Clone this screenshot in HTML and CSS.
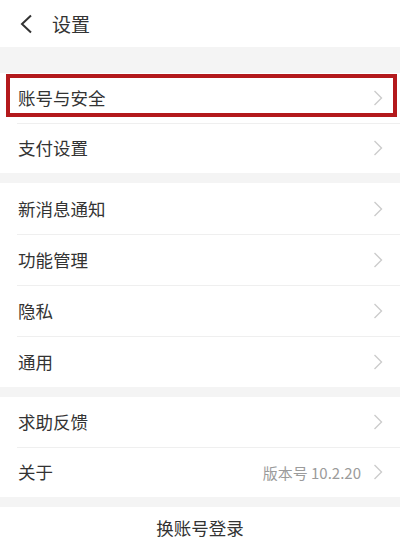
FILE: index.html
```html
<!DOCTYPE html>
<html lang="zh-CN">
<head>
<meta charset="utf-8">
<title>设置</title>
<link rel="stylesheet" href="styles.css">
</head>
<body>
<div class="page">
  <header class="topbar">
    <svg class="back" width="14" height="20" viewBox="0 0 14 20"><path d="M12 1.5 L3 10 L12 18.5" fill="none" stroke="#333" stroke-width="2"/></svg>
    <span class="title">设置</span>
  </header>

  <div class="gap gap-top"></div>
  <section class="group">
    <div class="row highlighted"><span class="label">账号与安全</span><svg class="chev" width="10" height="16" viewBox="0 0 10 16"><path d="M1.5 1 L8.5 8 L1.5 15" fill="none" stroke="#cccccc" stroke-width="1.4"/></svg><span class="mark"></span></div>
    <div class="row"><span class="label">支付设置</span><svg class="chev" width="10" height="16" viewBox="0 0 10 16"><path d="M1.5 1 L8.5 8 L1.5 15" fill="none" stroke="#cccccc" stroke-width="1.4"/></svg></div>
  </section>

  <div class="gap"></div>
  <section class="group group-tall">
    <div class="row"><span class="label">新消息通知</span><svg class="chev" width="10" height="16" viewBox="0 0 10 16"><path d="M1.5 1 L8.5 8 L1.5 15" fill="none" stroke="#cccccc" stroke-width="1.4"/></svg></div>
    <div class="row"><span class="label">功能管理</span><svg class="chev" width="10" height="16" viewBox="0 0 10 16"><path d="M1.5 1 L8.5 8 L1.5 15" fill="none" stroke="#cccccc" stroke-width="1.4"/></svg></div>
    <div class="row"><span class="label">隐私</span><svg class="chev" width="10" height="16" viewBox="0 0 10 16"><path d="M1.5 1 L8.5 8 L1.5 15" fill="none" stroke="#cccccc" stroke-width="1.4"/></svg></div>
    <div class="row"><span class="label">通用</span><svg class="chev" width="10" height="16" viewBox="0 0 10 16"><path d="M1.5 1 L8.5 8 L1.5 15" fill="none" stroke="#cccccc" stroke-width="1.4"/></svg></div>
  </section>

  <div class="gap"></div>
  <section class="group">
    <div class="row"><span class="label">求助反馈</span><svg class="chev" width="10" height="16" viewBox="0 0 10 16"><path d="M1.5 1 L8.5 8 L1.5 15" fill="none" stroke="#cccccc" stroke-width="1.4"/></svg></div>
    <div class="row"><span class="label">关于</span><span class="value">版本号 10.2.20</span><svg class="chev" width="10" height="16" viewBox="0 0 10 16"><path d="M1.5 1 L8.5 8 L1.5 15" fill="none" stroke="#cccccc" stroke-width="1.4"/></svg></div>
  </section>

  <div class="gap"></div>
  <div class="switch">换账号登录</div>
</div>
</body>
</html>
```

FILE: styles.css
```css
html, body {
  margin: 0;
  padding: 0;
  background: #ffffff;
}
body {
  font-family: "Noto Sans CJK SC", "Noto Sans", sans-serif;
  color: #333333;
}
.page {
  width: 400px;
  height: 540px;
  overflow: hidden;
  background: #ffffff;
}
.topbar {
  height: 47px;
  display: flex;
  align-items: center;
  padding-left: 19px;
  box-sizing: border-box;
}
.back {
  display: block;
}
.title {
  margin-left: 19px;
  font-size: 19px;
  line-height: 1;
  color: #333;
}
.gap {
  height: 10px;
  background: #f4f4f4;
}
.gap-top {
  height: 26px;
}
.group {
  background: #fff;
}
.row {
  position: relative;
  height: 50px;
  display: flex;
  align-items: center;
  padding: 0 17px 0 18px;
  box-sizing: border-box;
}
.group-tall .row {
  height: 51px;
}
.row + .row::before {
  content: "";
  position: absolute;
  top: 0;
  left: 17px;
  right: 0;
  height: 1px;
  background: #efefef;
}
.label {
  flex: 1;
  font-size: 17.5px;
  line-height: 1;
  color: #333;
}
.value {
  font-size: 15px;
  color: #9b9b9b;
  margin-right: 12px;
}
.chev {
  display: block;
  flex: none;
}
.mark {
  position: absolute;
  left: 6px;
  right: 3px;
  top: 1px;
  bottom: 6px;
  border: 4px solid #b3191c;
}
.switch {
  padding-top: 12px;
  text-align: center;
  font-size: 17.5px;
  line-height: 1;
  color: #333;
}
```
